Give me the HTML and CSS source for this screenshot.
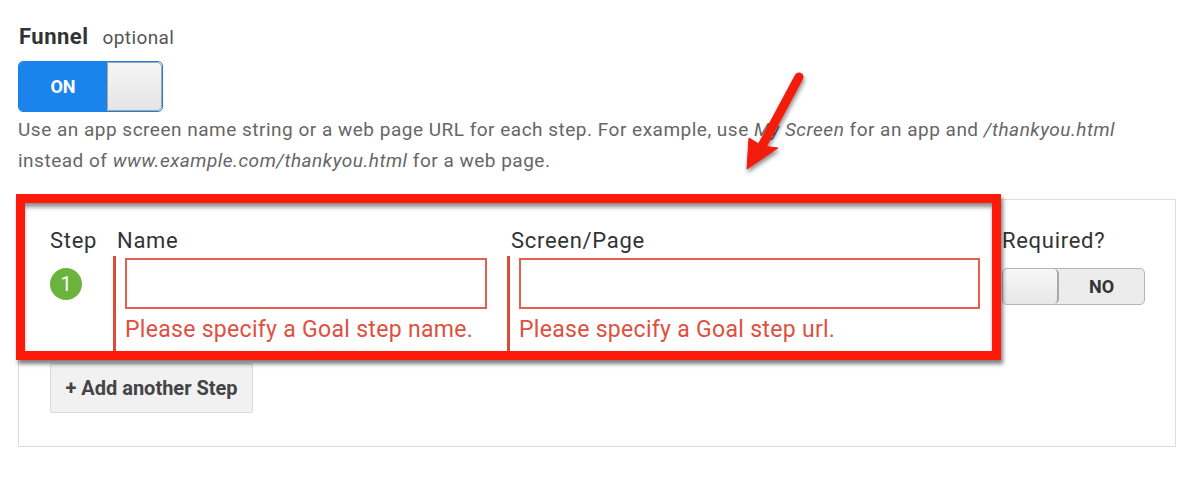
FILE: index.html
```html
<!DOCTYPE html>
<html>
<head>
<meta charset="utf-8">
<link rel="stylesheet" href="styles.css">
</head>
<body>
<div class="page">
  <div class="title"><span class="funnel">Funnel</span><span class="opt">optional</span></div>
  <div class="switch switch-on">
    <span class="switch-label on-label">ON</span>
    <span class="switch-knob"></span>
  </div>
  <p class="desc">Use an app screen name string or a web page URL for each step. For example, use <i>My Screen</i> for an app and <i>/thankyou.html</i><br>instead of <i>www.example.com/thankyou.html</i> for a web page.</p>
  <div class="panel">
    <div class="steps">
      <div class="hd">Step</div>
      <div class="hd hd-field">Name</div>
      <div class="hd hd-field">Screen/Page</div>
      <div class="hd">Required?</div>
      <div class="step-cell"><span class="badge">1</span></div>
      <div class="field">
        <div class="input"></div>
        <div class="msg">Please specify a Goal step name.</div>
      </div>
      <div class="field">
        <div class="input"></div>
        <div class="msg">Please specify a Goal step url.</div>
      </div>
      <div class="req-cell">
        <div class="switch switch-off">
          <span class="switch-knob"></span>
          <span class="switch-label off-label">NO</span>
        </div>
      </div>
    </div>
    <button class="add">+ Add another Step</button>
  </div>
</div>
<div class="annot-box"></div>
<svg class="annot-arrow" width="1200" height="479" viewBox="0 0 1200 479">
  <defs>
    <filter id="sh" x="-20%" y="-20%" width="140%" height="140%">
      <feDropShadow dx="1" dy="3" stdDeviation="2" flood-color="#000" flood-opacity="0.45"/>
    </filter>
  </defs>
  <g filter="url(#sh)" fill="#f21c10" stroke="#f21c10">
    <line x1="799" y1="77" x2="762" y2="146" stroke-width="9" stroke-linecap="round"/>
    <polygon points="747,169 749,138 762,146 778,148" stroke-width="1" stroke-linejoin="round"/>
  </g>
</svg>
</body>
</html>
```
FILE: styles.css
```css
* { box-sizing: border-box; }
html, body { margin: 0; padding: 0; background: #fff; }
body {
  font-family: Roboto, "Liberation Sans", Arial, sans-serif;
  color: #333;
  width: 1200px;
  height: 479px;
  overflow: hidden;
  position: relative;
}
.page { padding: 24px 24px 0 18px; }
.title { display: flex; align-items: baseline; gap: 14px; padding-left: 1px; line-height: 26px; }
.funnel { font-size: 22px; font-weight: 700; color: #333; letter-spacing: 0.5px; }
.opt { font-size: 19px; color: #555; letter-spacing: 0.4px; }

.switch {
  display: flex;
  border-radius: 5px;
  overflow: hidden;
  border: 1px solid #a9a9a9;
}
.switch-on { margin-top: 10px; width: 145px; height: 51px; border-color: #1a7fe6; }
.switch-label { display: flex; align-items: center; justify-content: center; font-weight: 700; }
.on-label { width: 88px; background: #1b84ec; color: #fff; font-size: 18px; }
.switch-on .switch-knob {
  flex: 1;
  background: linear-gradient(#f6f6f6, #e4e4e4);
  border: 1px solid #a4a4a4;
  border-radius: 0 5px 5px 0;
}
.desc {
  margin: 0;
  font-size: 19px;
  letter-spacing: 0.5px;
  line-height: 31px;
  color: #666;
  padding-top: 2px;
  white-space: nowrap;
}

.panel {
  margin-top: 23px;
  width: 1158px;
  height: 248px;
  border: 1px solid #dcdcdc;
  padding: 29px 0 0 31px;
}
.steps {
  display: grid;
  grid-template-columns: 63px 394px 495px 1fr;
  grid-template-rows: auto auto;
  row-gap: 3px;
}
.hd { font-size: 22px; letter-spacing: 0.7px; line-height: 24px; color: #333; white-space: nowrap; }
.hd-field { padding-left: 4px; }
.step-cell { padding: 12px 0 0 0; }
.badge {
  display: flex;
  align-items: center;
  justify-content: center;
  width: 32px;
  height: 32px;
  border-radius: 50%;
  background: #6cb33e;
  color: #fff;
  font-size: 20px;
}
.field {
  border-left: 3px solid #dd4b39;
  padding: 2px 20px 10px 9px;
}
.field + .field { padding-right: 22px; }
.input {
  height: 51px;
  border: 2px solid #e2604e;
  background: #fff;
}
.msg {
  color: #de5040;
  font-size: 23px;
  letter-spacing: 0.3px;
  line-height: 26px;
  margin-top: 8px;
  white-space: nowrap;
}
.req-cell { padding-top: 12px; }
.switch-off {
  width: 143px;
  height: 37px;
  background: #ececec;
  border-color: #b5b5b5;
}
.switch-off .switch-knob {
  width: 56px;
  background: linear-gradient(#f7f7f7, #e7e7e7);
  border-right: 2px solid #a9a9a9;
  border-radius: 5px;
}
.off-label { flex: 1; color: #333; font-size: 18px; }

.add {
  display: block;
  margin-top: 10px;
  width: 203px;
  height: 50px;
  background: #f1f1f1;
  border: 1px solid #d9d9d9;
  border-radius: 2px;
  font-family: Roboto, "Liberation Sans", Arial, sans-serif;
  font-size: 20px;
  font-weight: 700;
  color: #444;
  padding: 0;
}

.annot-box {
  position: absolute;
  left: 16px;
  top: 194px;
  width: 985px;
  height: 166px;
  border: 9px solid #fe1a0a;
  box-shadow: 2px 4px 4px rgba(0,0,0,0.5), inset 0 5px 4px -1px rgba(0,0,0,0.45);
}
.annot-arrow { position: absolute; left: 0; top: 0; pointer-events: none; }
```
